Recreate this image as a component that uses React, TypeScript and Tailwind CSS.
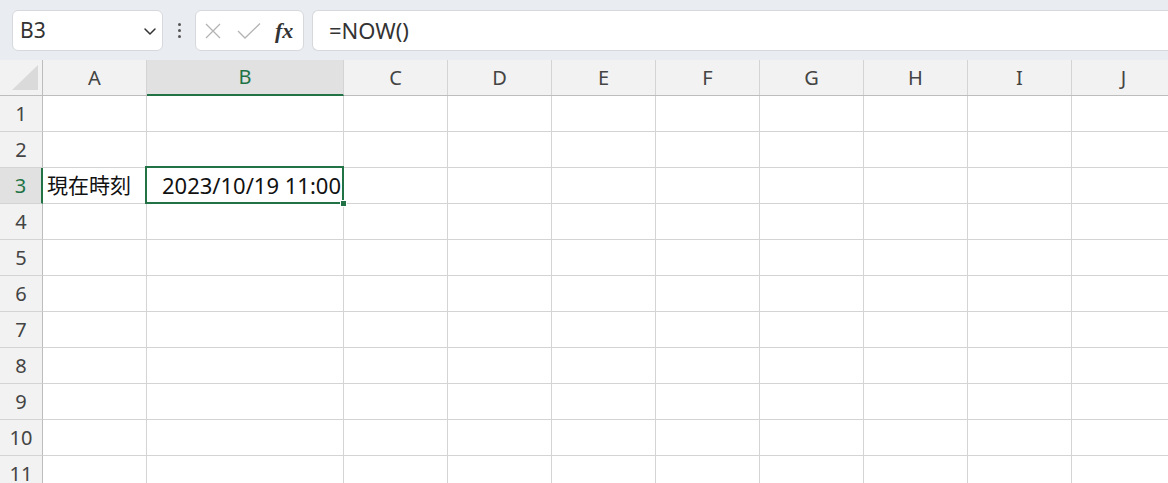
import React from "react";

const cols = [
  { l: "A", w: 104 },
  { l: "B", w: 197 },
  { l: "C", w: 104 },
  { l: "D", w: 104 },
  { l: "E", w: 104 },
  { l: "F", w: 104 },
  { l: "G", w: 104 },
  { l: "H", w: 104 },
  { l: "I", w: 104 },
  { l: "J", w: 104 },
];
const rows = [1, 2, 3, 4, 5, 6, 7, 8, 9, 10, 11];

export default function App() {
  return (
    <div
      className="w-[1168px] h-[483px] overflow-hidden bg-white text-[#222]"
      style={{ fontFamily: '"Noto Sans", "Noto Sans CJK JP", sans-serif' }}
    >
      {/* toolbar */}
      <div className="h-[60px] bg-[#e9ecf0] flex items-center pl-[12px] gap-0 pt-[1px]">
        <div className="w-[151px] h-[41px] bg-white rounded-[6px] border border-[#d6d8dc] flex items-center justify-between pl-[7px] pr-[4px]">
          <span className="text-[21px] text-[#333] mt-[1px]">B3</span>
          <svg width="16" height="16" viewBox="0 0 16 16" fill="none">
            <path d="M3 6l5 5 5-5" stroke="#333" strokeWidth="1.5" strokeLinecap="round" strokeLinejoin="round" />
          </svg>
        </div>
        <div className="w-[32px] flex flex-col items-center gap-[3px]">
          <div className="w-[3px] h-[3px] bg-[#555] rounded-full" />
          <div className="w-[3px] h-[3px] bg-[#555] rounded-full" />
          <div className="w-[3px] h-[3px] bg-[#555] rounded-full" />
        </div>
        <div className="w-[109px] h-[41px] bg-white rounded-[6px] border border-[#d6d8dc] flex items-center pl-[8px]">
          <svg width="18" height="18" viewBox="0 0 18 18" fill="none">
            <path d="M2 2l14 14M16 2L2 16" stroke="#b3b3b3" strokeWidth="1.3" />
          </svg>
          <svg width="26" height="18" viewBox="0 0 26 18" fill="none" className="ml-[14px]">
            <path d="M2 9l7 7L24 1.5" stroke="#b3b3b3" strokeWidth="1.3" />
          </svg>
          <span
            className="ml-[13px] text-[22px] italic font-bold text-[#333] leading-none"
            style={{ fontFamily: '"Liberation Serif", "DejaVu Serif", serif' }}
          >
            fx
          </span>
        </div>
        <div className="ml-[8px] flex-1 h-[41px] bg-white rounded-l-[6px] border border-r-0 border-[#d6d8dc] flex items-center pl-[16px]">
          <span className="text-[22px] text-[#333]">=NOW()</span>
        </div>
      </div>

      {/* column header */}
      <div className="flex h-[36px] bg-[#f2f2f2] border-b border-[#bdbdbd]">
        <div className="w-[43px] shrink-0 border-r border-[#bdbdbd] relative">
          <svg width="30" height="26" viewBox="0 0 30 26" className="absolute left-[10px] top-[5px]">
            <path d="M28 0L28 25L2 25Z" fill="#dadada" />
          </svg>
        </div>
        {cols.map((c) =>
          c.l === "B" ? (
            <div
              key={c.l}
              style={{ width: c.w }}
              className="shrink-0 bg-[#e1e1e1] border-r border-[#d4d4d4] border-b-2 border-b-[#217346] -mb-[1px] flex items-center justify-center text-[20px] text-[#217346]"
            >
              {c.l}
            </div>
          ) : (
            <div
              key={c.l}
              style={{ width: c.w }}
              className="shrink-0 border-r border-[#d4d4d4] flex items-center justify-center text-[20px] text-[#444]"
            >
              {c.l}
            </div>
          )
        )}
      </div>

      {/* rows */}
      {rows.map((r) => (
        <div key={r} className="flex h-[36px]">
          {r === 3 ? (
            <div className="w-[43px] shrink-0 bg-[#e1e1e1] border-r-2 border-[#217346] border-b border-b-[#d4d4d4] flex items-center justify-center text-[20px] text-[#217346]">
              {r}
            </div>
          ) : (
            <div className="w-[43px] shrink-0 bg-[#f2f2f2] border-r border-[#bdbdbd] border-b border-b-[#d4d4d4] flex items-center justify-center text-[20px] text-[#444]">
              {r}
            </div>
          )}
          {cols.map((c) => {
            if (r === 3 && c.l === "A") {
              return (
                <div
                  key={c.l}
                  style={{ width: c.w }}
                  className="shrink-0 border-r border-b border-[#d4d4d4] flex items-center pl-[4px] text-[21px] text-[#111]"
                >
                  現在時刻
                </div>
              );
            }
            if (r === 3 && c.l === "B") {
              return (
                <div
                  key={c.l}
                  style={{ width: c.w }}
                  className="shrink-0 border-r border-b border-[#d4d4d4] relative"
                >
                  <div className="absolute -left-[2px] -top-[2px] w-[199px] h-[38px] border-2 border-[#217346] flex items-center justify-end pr-[1px] text-[22px] text-[#111]">
                    2023/10/19 11:00
                    <div className="absolute -right-[5px] -bottom-[5px] w-[7px] h-[7px] bg-[#217346] border border-white" />
                  </div>
                </div>
              );
            }
            return (
              <div
                key={c.l}
                style={{ width: c.w }}
                className="shrink-0 border-r border-b border-[#d4d4d4]"
              />
            );
          })}
        </div>
      ))}
    </div>
  );
}
